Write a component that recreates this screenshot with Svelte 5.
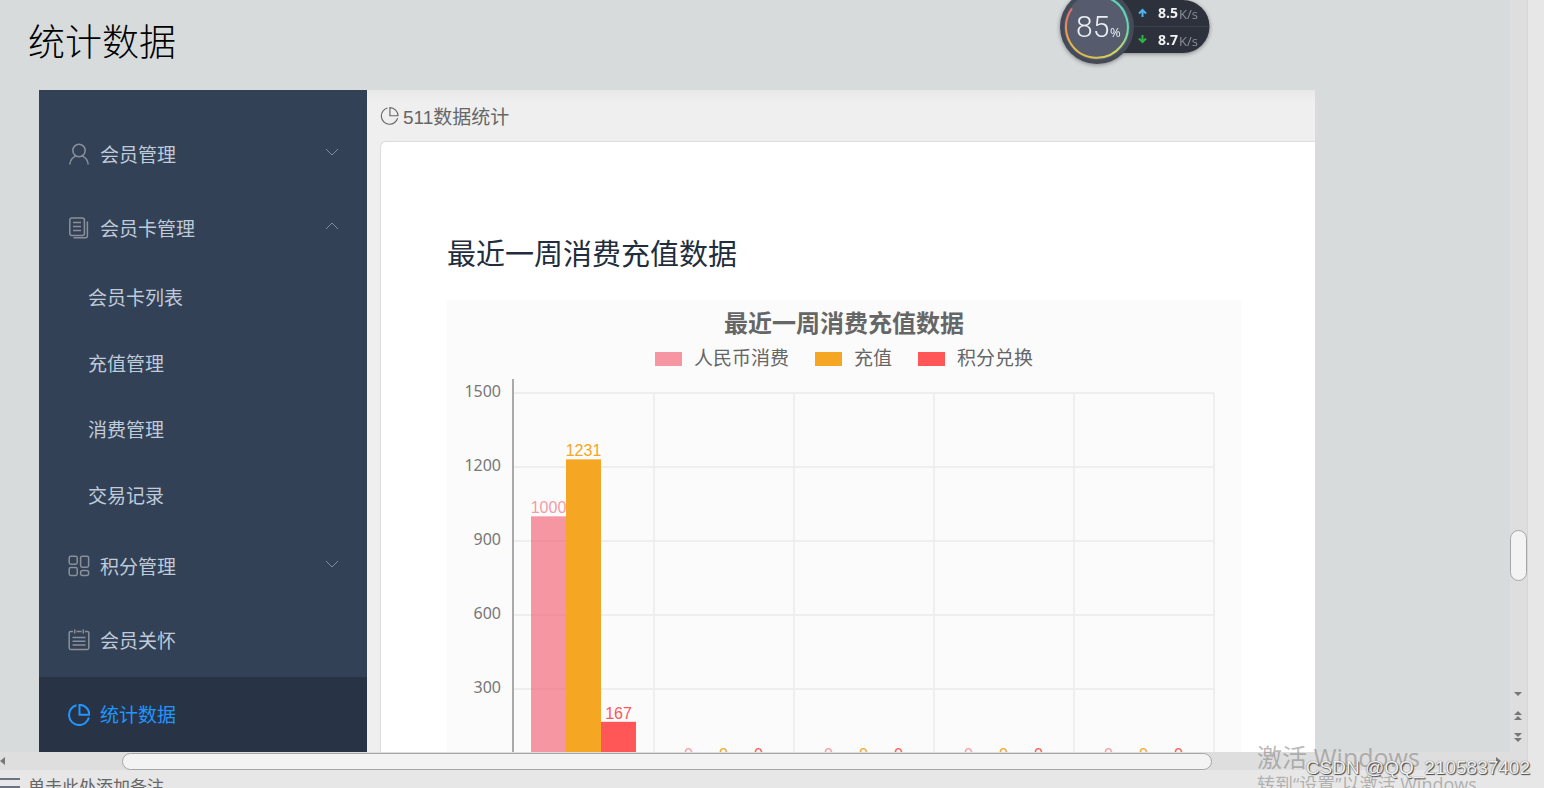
<script lang="ts">
  type Item = { label: string; icon: string; open?: boolean; active?: boolean; children?: string[] };

  const menu: Item[] = [
    { label: '会员管理', icon: 'user', children: [] },
    {
      label: '会员卡管理',
      icon: 'copy',
      open: true,
      children: ['会员卡列表', '充值管理', '消费管理', '交易记录']
    },
    { label: '积分管理', icon: 'grid', children: [] },
    { label: '会员关怀', icon: 'calendar' },
    { label: '统计数据', icon: 'pie', active: true }
  ];

  const series = [
    { name: '人民币消费', color: '#f36072', opacity: 0.65, data: [1000, 0, 0, 0, 0] },
    { name: '充值', color: '#f5a623', opacity: 1, data: [1231, 0, 0, 0, 0] },
    { name: '积分兑换', color: '#ff5757', opacity: 1, data: [167, 0, 0, 0, 0] }
  ];

  // plot geometry, in viewBox units
  const left = 66;
  const top = 21;
  const step = 74;
  const band = 140;
  const barWidth = 35;
  const ticks = [1500, 1200, 900, 600, 300, 0];
  const base = top + step * 5;

  const barX = (group: number, s: number) => left + 18 + group * band + s * barWidth;
  const barHeight = (value: number) => (value / 300) * step;
</script>

{#snippet icon(name: string)}
  <svg class="icon" viewBox="0 0 22 22" aria-hidden="true">
    {#if name === 'user'}
      <circle cx="11" cy="7.5" r="6.2" />
      <path d="M1.8 21.5c.3-4 2.6-7 6-8.6M20.2 21.500c-.3-4-2.6-7-6-8.6" />
    {:else if name === 'copy'}
      <rect x="1.8" y="1" width="14.6" height="17.6" rx="2" />
      <path d="M5 5.5h8M5 9.5h8M5 13.5h8M19.4 4.5v14.2a2 2 0 0 1-2 2H5.5" />
    {:else if name === 'grid'}
      <rect x="1.2" y="1.2" width="8" height="8" rx="1.6" />
      <rect x="12.6" y="1.2" width="8" height="11" rx="1.6" />
      <rect x="1.2" y="12.4" width="8" height="8" rx="1.6" />
      <rect x="12.6" y="15.4" width="8" height="5" rx="2" />
    {:else if name === 'calendar'}
      <path d="M5 2.5H2.6a1.4 1.4 0 0 0-1.4 1.4v15.2a1.4 1.4 0 0 0 1.4 1.4h16.8a1.4 1.4 0 0 0 1.4-1.4V3.9a1.4 1.4 0 0 0-1.4-1.4H17M8.5 2.5h5M6.7.5v4M15.3.5v4M4.5 8.5h13M4.5 12.3h13M4.5 16.1h13" />
    {:else}
      <path d="M8.5 1.2A10.1 10.1 0 1 0 20.9 13.5" />
      <path d="M11.5 .8V10.7H21.4A10 10 0 0 0 11.5.8Z" />
    {/if}
  </svg>
{/snippet}

<div class="window">
  <main class="slide">
    <h1>统计数据</h1>

    <div class="app">
      <nav class="sidebar">
        {#each menu as item}
          <a class="item" class:active={item.active} href="#menu">
            {@render icon(item.icon)}
            <span>{item.label}</span>
            {#if item.children}
              <svg class="chevron" class:up={item.open} viewBox="0 0 14 8" aria-hidden="true">
                <path d="M1 1l6 6 6-6" />
              </svg>
            {/if}
          </a>
          {#each item.children ?? [] as child}
            <a class="sub" href="#menu">{child}</a>
          {/each}
        {/each}
      </nav>

      <section class="content">
        <header class="crumb">
          <svg class="crumb-icon" viewBox="0 0 22 22" aria-hidden="true">
            <path d="M8.5 1.2A10.1 10.1 0 1 0 20.9 13.5" />
            <path d="M11.5 .8V10.7H21.4A10 10 0 0 0 11.5.8Z" />
          </svg>
          <span>511数据统计</span>
        </header>

        <div class="card">
          <h2>最近一周消费充值数据</h2>
          <div class="chart">
            <h3>最近一周消费充值数据</h3>
            <ul class="legend">
              {#each series as s}
                <li>
                  <svg class="swatch" viewBox="0 0 27 14" aria-hidden="true">
                    <rect width="27" height="14" fill={s.color} fill-opacity={s.opacity} />
                  </svg>
                  {s.name}
                </li>
              {/each}
            </ul>
            <svg class="plot" viewBox="0 0 794 430">
              {#each ticks as tick, i}
                <line class="grid" x1={left} x2={left + band * 5 + 1} y1={top + i * step} y2={top + i * step} />
                <text class="tick" x="54" y={top + i * step + 4}>{tick}</text>
              {/each}
              {#each [1, 2, 3, 4, 5] as i}
                <line class="grid" x1={left + i * band + 1} x2={left + i * band + 1} y1={top} y2={base} />
              {/each}
              <line class="axis" x1={left} x2={left} y1="7" y2={base} />
              {#each series as s, si}
                {#each s.data as value, i}
                  <rect
                    x={barX(i, si)}
                    y={base - barHeight(value)}
                    width={barWidth}
                    height={barHeight(value)}
                    fill={s.color}
                    fill-opacity={s.opacity}
                  />
                  <text
                    class="value"
                    x={barX(i, si) + barWidth / 2}
                    y={base - barHeight(value) - 3}
                    fill={s.color}
                    fill-opacity={s.opacity}>{value}</text>
                {/each}
              {/each}
            </svg>
          </div>
        </div>
      </section>
    </div>
  </main>

  <div class="vscroll">
    <div class="vthumb"></div>
    <div class="arrows">
      <button aria-label="向下滚动"><svg viewBox="0 0 8 10"><path d="M0 3h8L4 7z" /></svg></button>
      <button aria-label="上一张"><svg viewBox="0 0 8 10"><path d="M0 4h8L4 0zM0 9h8L4 5z" /></svg></button>
      <button aria-label="下一张"><svg viewBox="0 0 8 10"><path d="M0 0h8L4 4zM0 5h8L4 9z" /></svg></button>
    </div>
  </div>
  <div class="pane"></div>

  <div class="hscroll">
    <button aria-label="向左滚动"><svg viewBox="0 0 5 8"><path d="M5 0v8L0 4z" /></svg></button>
    <div class="hthumb"></div>
    <button aria-label="向右滚动"><svg viewBox="0 0 5 8"><path d="M0 0v8l5-4z" /></svg></button>
  </div>

  <footer class="notes">
    <span class="lines"></span>
    <span>单击此处添加备注</span>
  </footer>

  <svg class="meter" viewBox="0 0 156 70">
    <defs>
      <linearGradient id="ring" x1="0" y1="1" x2="1" y2="0">
        <stop offset="0" stop-color="#e8b04a" />
        <stop offset="0.45" stop-color="#d2d95c" />
        <stop offset="0.75" stop-color="#62dca8" />
        <stop offset="1" stop-color="#55d0d8" />
      </linearGradient>
      <linearGradient id="ringStart" x1="0" y1="0" x2="0" y2="1">
        <stop offset="0" stop-color="#ef6a66" />
        <stop offset="1" stop-color="#e8b04a" />
      </linearGradient>
    </defs>
    <path d="M38 0H124a26 26 0 0 1 0 53H38Z" fill="#2d313c" />
    <path d="M74 26.500H150" stroke="#3b404c" />
    <circle cx="38" cy="27" r="37" fill="#454a58" />
    <circle cx="38" cy="27" r="33" fill="#565c6e" />
    <path d="M11.400 43A31 31 0 1 0 48-2.500" fill="none" stroke="url(#ring)" stroke-width="2" />
    <path d="M13 8.500A31 31 0 0 0 11.400 43" fill="none" stroke="url(#ringStart)" stroke-width="2" />
    <text class="percent" x="17" y="37">85</text>
    <text class="sign" x="51" y="37">%</text>
    <path d="M83.500 17V10M80 13.500l3.500-3.500 3.500 3.500" fill="none" stroke="#4db4f0" stroke-width="2" />
    <path d="M83.500 35v7M80 38.500l3.500 3.500 3.500-3.500" fill="none" stroke="#2fb344" stroke-width="2" />
    <text class="speed" x="99" y="18">8.5</text>
    <text class="unit" x="120" y="19">K/s</text>
    <text class="speed" x="99" y="45">8.7</text>
    <text class="unit" x="120" y="46">K/s</text>
  </svg>

  <div class="activate">
    <div class="activate-title">激活 Windows</div>
    <div>转到“设置”以激活 Windows</div>
  </div>
  <div class="csdn">CSDN @QQ_2105837402</div>
</div>

<style>
  :global(body) {
    margin: 0;
    overflow: hidden;
  }
  .window {
    position: relative;
    display: grid;
    grid-template-columns: 1fr 17px 17px;
    grid-template-rows: minmax(0, 1fr) 18px 18px;
    height: 100vh;
    overflow: hidden;
    background: #e7e7e7;
    font-family: "Liberation Sans", "Noto Sans CJK SC", sans-serif;
    font-size: 19px;
  }
  h1, h2, h3, ul {
    margin: 0;
    padding: 0;
    font-weight: 400;
  }
  button {
    display: flex;
    padding: 0;
    border: none;
    background: none;
    cursor: pointer;
  }

  .slide {
    display: flex;
    flex-direction: column;
    min-width: 0;
    overflow: hidden;
    background: #d7dbdc;
  }
  h1 {
    flex: none;
    padding: 14px 28px 24px;
    color: #000;
    font-family: "Noto Sans CJK SC", sans-serif;
    font-size: 37px;
    font-weight: 300;
    line-height: 52px;
  }
  .app {
    display: flex;
    flex: 1;
    min-height: 0;
    margin: 0 195px 0 39px;
  }

  .sidebar {
    display: flex;
    flex: none;
    flex-direction: column;
    box-sizing: border-box;
    width: 328px;
    padding-top: 27px;
    overflow: hidden;
    background: #334157;
  }
  .item,
  .sub {
    display: flex;
    flex: none;
    align-items: center;
    box-sizing: border-box;
    color: #bfcbd9;
    text-decoration: none;
  }
  .item {
    gap: 10px;
    height: 74px;
    padding: 0 28px 0 29px;
  }
  .item span { padding-bottom: 2px; }
  .sub {
    height: 66px;
    padding: 0 0 4px 49px;
  }
  .item.active {
    flex: 1 0 74px;
    background: #283345;
    color: #2196ff;
  }
  .icon {
    width: 22px;
    height: 22px;
    fill: none;
    stroke: #8a9099;
    stroke-width: 1.5;
  }
  .active .icon {
    stroke: #2196ff;
    stroke-width: 2;
  }
  .chevron {
    width: 14px;
    height: 8px;
    margin: 0 0 4px auto;
    fill: none;
    stroke: #848b96;
  }
  .chevron.up { transform: rotate(180deg); }

  .content {
    display: flex;
    flex: 1;
    flex-direction: column;
    min-width: 0;
    padding-left: 13px;
    background: linear-gradient(#e8e8e8, #efefef 12px);
  }
  .crumb {
    display: flex;
    flex: none;
    align-items: center;
    gap: 4px;
    height: 51px;
    color: #666;
  }
  .crumb-icon {
    width: 19px;
    height: 18px;
    fill: none;
    stroke: #666;
    stroke-width: 1.4;
  }
  .card {
    flex: 1;
    min-height: 0;
    padding: 86px 74px 0 66px;
    overflow: hidden;
    border: solid #dcdcdc;
    border-width: 1px 0 0 1px;
    border-radius: 6px 0 0 0;
    background: #fff;
  }
  h2 {
    padding-bottom: 18px;
    color: #1f2d3d;
    font-size: 29px;
    line-height: 54px;
  }
  .chart {
    padding-top: 8px;
    background: #fbfbfb;
  }
  h3 {
    color: #666;
    font-size: 24px;
    font-weight: 700;
    line-height: 32px;
    text-align: center;
  }
  .legend {
    display: flex;
    justify-content: center;
    gap: 26px;
    height: 32px;
    color: #666;
    line-height: 38px;
    list-style: none;
  }
  .legend li {
    display: flex;
    align-items: center;
    gap: 12px;
    height: 38px;
  }
  .swatch {
    width: 27px;
    height: 14px;
  }
  .plot {
    display: block;
    width: 100%;
  }
  .grid {
    stroke: #eee;
    stroke-width: 2;
  }
  .axis {
    stroke: #aaa;
    stroke-width: 2;
  }
  .tick {
    fill: #777;
    font-family: "Noto Sans", sans-serif;
    font-size: 16px;
    text-anchor: end;
  }
  .value {
    font-size: 16px;
    text-anchor: middle;
  }

  .vscroll {
    display: flex;
    flex-direction: column;
    justify-content: space-between;
    grid-row: 1 / 3;
    grid-column: 2;
    background: #dedede;
  }
  .vthumb,
  .hthumb {
    box-sizing: border-box;
    border: 1px solid #a6a6a6;
    border-radius: 9px;
    background: #f3f3f3;
  }
  .vthumb {
    height: 51px;
    margin-top: 530px;
  }
  .arrows {
    display: flex;
    flex-direction: column;
    gap: 12px;
    padding: 0 0 27px 4px;
  }
  .arrows svg {
    width: 8px;
    height: 10px;
    fill: #777;
  }
  .pane {
    grid-row: 1 / 3;
    grid-column: 3;
    border-left: 1px solid #d6d6d6;
  }
  .hscroll {
    display: flex;
    align-items: center;
    grid-row: 2;
    grid-column: 1;
    padding-right: 9px;
    background: #dedede;
  }
  .hscroll svg {
    width: 5px;
    height: 8px;
    fill: #777;
  }
  .hthumb {
    flex: 1;
    height: 17px;
    margin: 0 284px 0 117px;
  }
  .notes {
    display: flex;
    grid-row: 3;
    grid-column: 1 / 4;
    gap: 8px;
    padding-top: 4px;
    overflow: hidden;
    color: #666;
    font-size: 17px;
    line-height: 28px;
  }
  .lines {
    width: 20px;
    height: 6px;
    margin-top: 4px;
    border: solid #6b7385;
    border-width: 2px 0;
  }

  .meter {
    position: absolute;
    top: 0;
    right: 329px;
    width: 156px;
    height: 70px;
    font-family: "Open Sans", sans-serif;
    filter: drop-shadow(0 1px 2px rgba(0, 0, 0, 0.4));
  }
  .percent {
    fill: #eceef2;
    font-family: Roboto, sans-serif;
    font-size: 30px;
    font-weight: 300;
  }
  .sign {
    fill: #eceef2;
    font-size: 13px;
  }
  .speed {
    fill: #f2f2f2;
    font-size: 14px;
    font-weight: 700;
  }
  .unit {
    fill: #8b8f98;
    font-size: 13px;
  }
  .activate {
    position: absolute;
    right: 0;
    bottom: -9px;
    width: 287px;
    color: rgba(120, 120, 120, 0.5);
    font-family: "Open Sans", "Noto Sans CJK SC", sans-serif;
    font-size: 18px;
    line-height: 26px;
    white-space: nowrap;
  }
  .activate-title {
    font-size: 25px;
    line-height: 28px;
  }
  .csdn {
    position: absolute;
    right: 14px;
    bottom: 8px;
    color: #f0f0f0;
    font-size: 19px;
    line-height: 24px;
    text-shadow: 1px 1px 1px #444, 0 0 1px #555;
    white-space: nowrap;
  }
</style>
